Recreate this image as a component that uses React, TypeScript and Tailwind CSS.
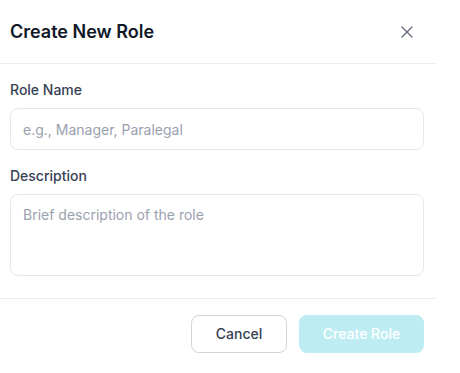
import { X } from 'lucide-react'

export default function App() {
  return (
    <div className="h-[373px] w-[460px] bg-white font-['Inter',sans-serif]">
      <div className="w-[436px] rounded-tr-xl bg-white">
        <div className="flex h-[64px] items-center justify-between border-b border-[#eceef1] pl-[10px] pr-[19px]">
          <h2 className="text-lg font-semibold text-gray-900">Create New Role</h2>
          <button type="button" className="text-gray-500">
            <X size={20} strokeWidth={1.6} />
          </button>
        </div>

        <div className="flex flex-col gap-4 pb-[22px] pl-[10px] pr-[12px] pt-4">
          <div>
            <label className="mb-2 block text-sm font-medium text-gray-700">Role Name</label>
            <input
              type="text"
              placeholder="e.g., Manager, Paralegal"
              className="h-[42px] w-full rounded-lg border border-gray-200 px-3 text-sm text-gray-900 placeholder:text-gray-400 focus:outline-none"
            />
          </div>
          <div>
            <label className="mb-2 block text-sm font-medium text-gray-700">Description</label>
            <textarea
              placeholder="Brief description of the role"
              className="block h-[82px] w-full resize-none rounded-lg border border-gray-200 px-3 py-2.5 text-sm text-gray-900 placeholder:text-gray-400 focus:outline-none"
            />
          </div>
        </div>

        <div className="flex justify-end gap-3 border-t border-[#eceef1] pr-[12px] pt-4">
          <button
            type="button"
            className="h-[38px] w-[96px] rounded-lg border border-gray-300 bg-white text-sm font-medium text-gray-700"
          >
            Cancel
          </button>
          <button
            type="button"
            disabled
            className="h-[38px] w-[125px] rounded-lg bg-[#bdedf2] text-sm font-medium text-white"
          >
            Create Role
          </button>
        </div>
      </div>
    </div>
  )
}
